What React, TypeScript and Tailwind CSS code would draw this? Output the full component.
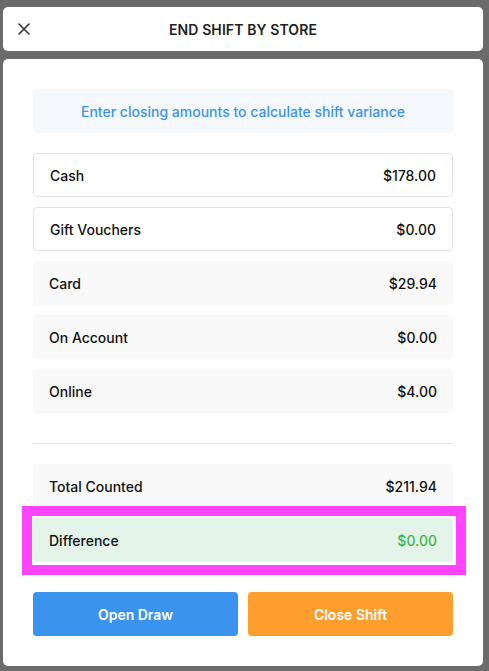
import React from "react";

const rows = [
  { label: "Cash", value: "$178.00", input: true },
  { label: "Gift Vouchers", value: "$0.00", input: true },
  { label: "Card", value: "$29.94", input: false },
  { label: "On Account", value: "$0.00", input: false },
  { label: "Online", value: "$4.00", input: false },
];

export default function App() {
  return (
    <div
      className="w-[489px] h-[671px] bg-[#6b6b6b] pl-[3px] pr-[6px] pt-[7px] flex flex-col gap-[8px] text-[#111111]"
      style={{ fontFamily: "Inter, 'Noto Sans', sans-serif" }}
    >
      <div className="relative h-[44px] bg-white rounded-[5px] flex items-center justify-center">
        <svg
          className="absolute left-[15px] top-[16px]"
          width="12"
          height="12"
          viewBox="0 0 12 12"
          fill="none"
          stroke="#333"
          strokeWidth="1.6"
          strokeLinecap="round"
        >
          <path d="M1 1 L11 11 M11 1 L1 11" />
        </svg>
        <span className="text-[14px] font-semibold text-[#222] tracking-[0.1px]">END SHIFT BY STORE</span>
      </div>
      <div className="h-[607px] bg-white rounded-[5px] p-[30px] flex flex-col">
        <div className="h-[44px] bg-[#f5f9fd] rounded-[4px] flex items-center justify-center text-[14px] font-medium text-[#3a93ef]">
          Enter closing amounts to calculate shift variance
        </div>
        <div className="mt-[20px] flex flex-col gap-[10px]">
          {rows.map((r) =>
            r.input ? (
              <div
                key={r.label}
                className="h-[44px] border border-[#e2e2e2] rounded-[4px] bg-white flex items-center justify-between px-[16px] text-[14px] font-medium"
              >
                <span>{r.label}</span>
                <span>{r.value}</span>
              </div>
            ) : (
              <div
                key={r.label}
                className="h-[44px] rounded-[4px] bg-[#f9f9f9] flex items-center justify-between px-[16px] text-[14px] font-medium"
              >
                <span>{r.label}</span>
                <span>{r.value}</span>
              </div>
            )
          )}
        </div>
        <div className="mt-[30px] h-px bg-[#e3e3e3]" />
        <div className="mt-[20px] h-[44px] rounded-[4px] bg-[#f9f9f9] flex items-center justify-between px-[16px] text-[14px] font-medium">
          <span>Total Counted</span>
          <span>$211.94</span>
        </div>
        <div className="relative mt-[10px] h-[44px] rounded-[4px] bg-[#e5f4e9] flex items-center justify-between px-[16px] text-[14px] font-medium">
          <span>Difference</span>
          <span className="text-[#3fb54c]">$0.00</span>
          <div className="absolute -top-[12px] -left-[11px] -right-[13px] -bottom-[13px] border-[10px] border-[#ff44ff] pointer-events-none" />
        </div>
        <div className="mt-[30px] flex gap-[10px]">
          <button className="flex-1 h-[44px] rounded-[4px] bg-[#3a94ee] text-white text-[14px] font-semibold">
            Open Draw
          </button>
          <button className="flex-1 h-[44px] rounded-[4px] bg-[#fd9e2f] text-white text-[14px] font-semibold">
            Close Shift
          </button>
        </div>
      </div>
    </div>
  );
}
